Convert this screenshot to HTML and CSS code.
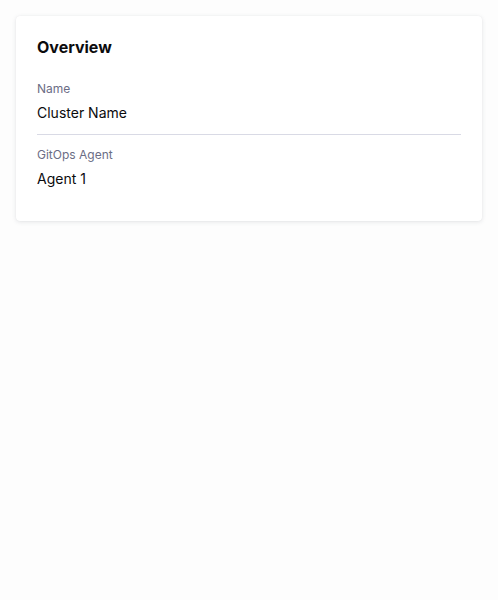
FILE: index.html
```html
<!DOCTYPE html>
<html>
<head>
<meta charset="utf-8">
<link rel="stylesheet" href="styles.css">
</head>
<body>
<div class="card">
  <h2 class="title">Overview</h2>
  <div class="field">
    <div class="label">Name</div>
    <div class="value">Cluster Name</div>
  </div>
  <div class="divider"></div>
  <div class="field">
    <div class="label">GitOps Agent</div>
    <div class="value">Agent 1</div>
  </div>
</div>
</body>
</html>
```
FILE: styles.css
```css
html, body {
  margin: 0;
  padding: 0;
  background: #fdfdfd;
  font-family: Inter, "Noto Sans", sans-serif;
}
body {
  padding: 16px;
}
.card {
  width: 466px;
  box-sizing: border-box;
  background: #ffffff;
  border-radius: 4px;
  box-shadow: 0 0 1px rgba(40, 41, 61, 0.08), 0 1px 4px rgba(96, 97, 112, 0.16);
  padding: 20px 21px 32px;
}
.title {
  margin: 0 0 23px;
  font-size: 16px;
  line-height: 22px;
  font-weight: 700;
  color: #0b0b0d;
}
.label {
  font-size: 12px;
  line-height: 16px;
  color: #6b6d85;
}
.value {
  margin-top: 6px;
  font-size: 14px;
  line-height: 20px;
  color: #0b0b0d;
}
.divider {
  height: 1px;
  background: #d9dae5;
  margin: 11px 0 12px;
}
```
